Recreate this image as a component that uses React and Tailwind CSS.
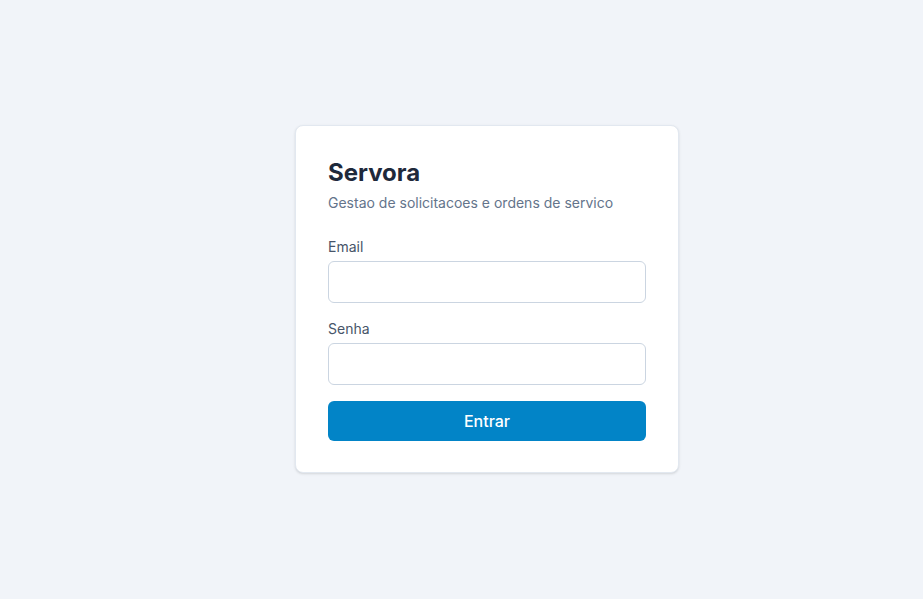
import React from "react";

export default function App() {
  return (
    <div
      className="min-h-screen bg-[#f1f4f9] flex items-center justify-center pl-[51px] pb-[1px]"
      style={{ fontFamily: "Inter, 'Noto Sans', sans-serif" }}
    >
      <div className="w-[384px] bg-white rounded-lg border border-[#e2e8f0] shadow-sm p-8 pt-[31px] pb-[31px]">
        <h1 className="text-2xl font-bold text-[#1e293b] leading-8">Servora</h1>
        <p className="mt-1 text-sm text-[#64748b]">
          Gestao de solicitacoes e ordens de servico
        </p>

        <div className="mt-6">
          <label className="block text-sm text-[#475569] mb-1">Email</label>
          <input
            type="email"
            className="w-full h-[42px] px-3 border border-[#cbd5e1] rounded-md outline-none"
          />
        </div>

        <div className="mt-4">
          <label className="block text-sm text-[#475569] mb-1">Senha</label>
          <input
            type="password"
            className="w-full h-[42px] px-3 border border-[#cbd5e1] rounded-md outline-none"
          />
        </div>

        <button className="mt-4 w-full h-10 bg-[#0284c7] text-white rounded-md font-medium text-base">
          Entrar
        </button>
      </div>
    </div>
  );
}
